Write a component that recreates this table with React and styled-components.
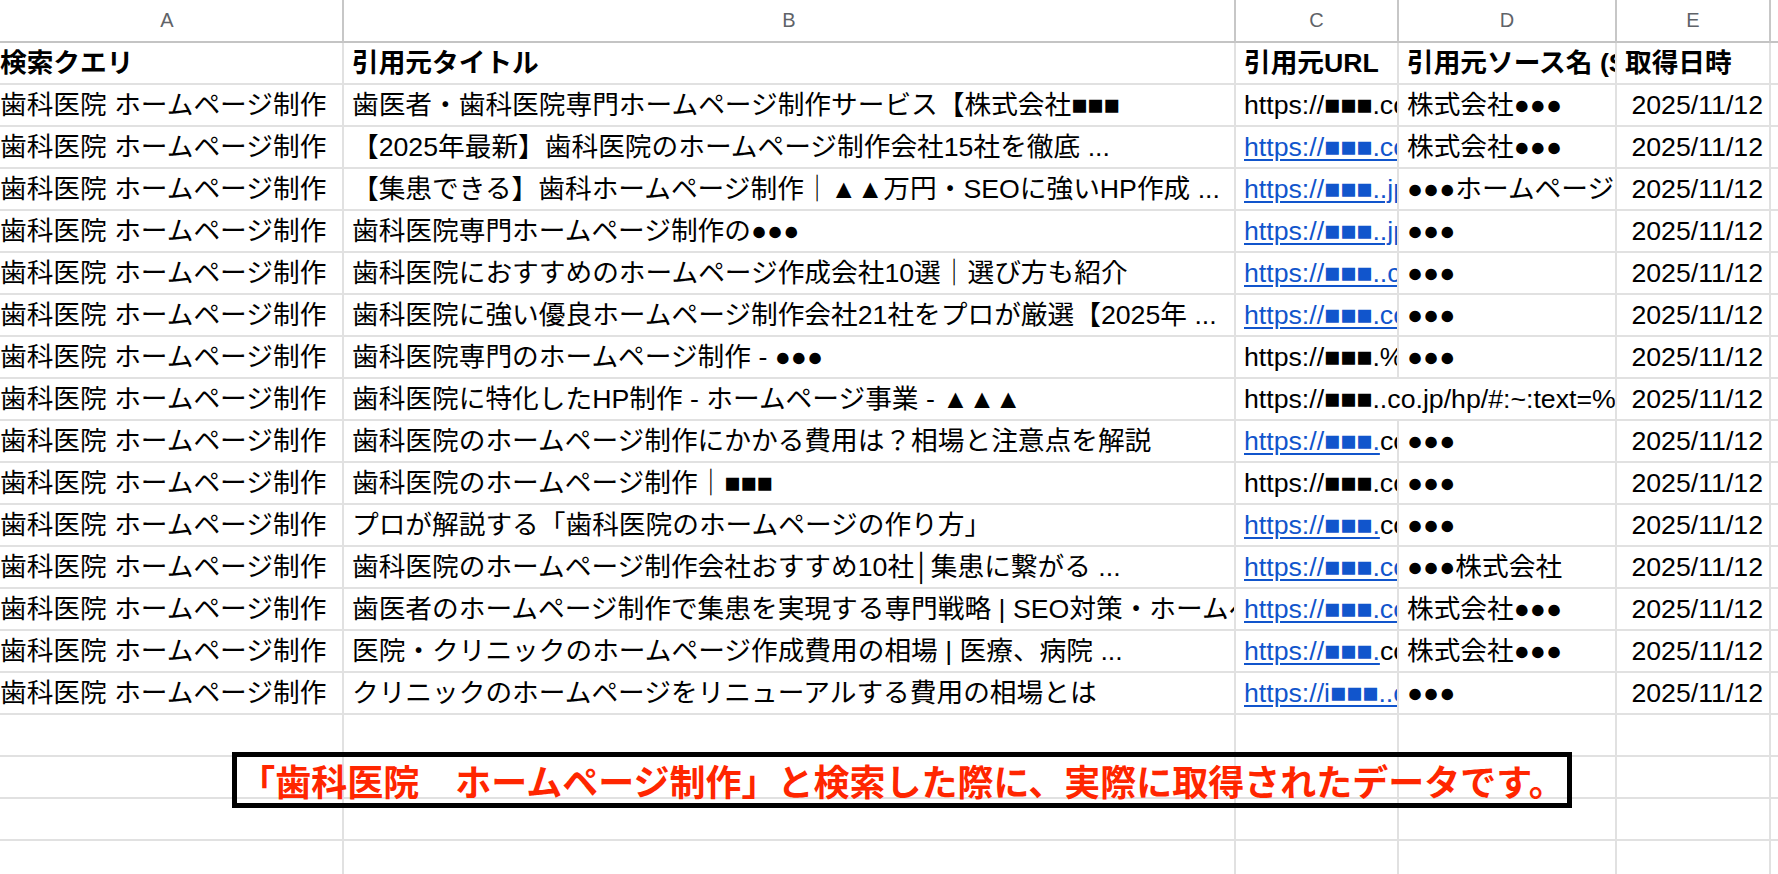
import React from 'react'
import styled, { createGlobalStyle } from 'styled-components'

const QUERY = '歯科医院 ホームページ制作'
const DATE = '2025/11/12'

const rows = [
    { title: '歯医者・歯科医院専門ホームページ制作サービス【株式会社■■■', plain: 'https://■■■.com/dental/', source: '株式会社●●●' },
    { title: '【2025年最新】歯科医院のホームページ制作会社15社を徹底 ...', link: 'https://■■■.com/column/', source: '株式会社●●●' },
    { title: '【集患できる】歯科ホームページ制作｜▲▲万円・SEOに強いHP作成 ...', link: 'https://■■■..jp/', source: '●●●ホームページ制作' },
    { title: '歯科医院専門ホームページ制作の●●●', link: 'https://■■■..jp/dental/', source: '●●●' },
    { title: '歯科医院におすすめのホームページ作成会社10選｜選び方も紹介', link: 'https://■■■..com/', source: '●●●' },
    { title: '歯科医院に強い優良ホームページ制作会社21社をプロが厳選【2025年 ...', link: 'https://■■■.com/media/', source: '●●●' },
    { title: '歯科医院専門のホームページ制作 - ●●●', plain: 'https://■■■.%E6%AD%AF', source: '●●●' },
    { title: '歯科医院に特化したHP制作 - ホームページ事業 - ▲▲▲', plain: 'https://■■■..co.jp/hp/#:~:text=%E6%AD%AF%E7%A7%91', source: null },
    { title: '歯科医院のホームページ制作にかかる費用は？相場と注意点を解説', link: 'https://■■■.', plain: 'com/', source: '●●●' },
    { title: '歯科医院のホームページ制作｜■■■', plain: 'https://■■■.com/', source: '●●●' },
    { title: 'プロが解説する「歯科医院のホームページの作り方」', link: 'https://■■■.', plain: 'com/', source: '●●●' },
    { title: '歯科医院のホームページ制作会社おすすめ10社│集患に繋がる ...', link: 'https://■■■.com/', source: '●●●株式会社' },
    { title: '歯医者のホームページ制作で集患を実現する専門戦略 | SEO対策・ホームページ制作', link: 'https://■■■.com/', source: '株式会社●●●' },
    { title: '医院・クリニックのホームページ作成費用の相場 | 医療、病院 ...', link: 'https://■■■.', plain: 'com/', source: '株式会社●●●' },
    { title: 'クリニックのホームページをリニューアルする費用の相場とは', link: 'https://i■■■..com/', source: '●●●' },
]

const letters = ['A', 'B', 'C', 'D', 'E', '']
const headings = ['検索クエリ', '引用元タイトル', '引用元URL', '引用元ソース名 (Source)', '取得日時', '']

export default function App() {
    return (
        <Page>
            <GlobalStyle />

            <Sheet>
                {letters.map((l, i) => (
                    <ColHead key={'col' + i}>{l}</ColHead>
                ))}

                {headings.map((h, i) => (
                    <Cell key={'head' + i} $bold>{h}</Cell>
                ))}

                {rows.map((r, i) => (
                    <React.Fragment key={i}>
                        <Cell>{QUERY}</Cell>
                        <Cell>{r.title}</Cell>
                        <Cell $span={r.source === null ? 2 : 1}>
                            <span>
                                {r.link && <Link>{r.link}</Link>}
                                {r.plain}
                            </span>
                        </Cell>
                        {r.source !== null && <Cell>{r.source}</Cell>}
                        <Cell $right>{DATE}</Cell>
                        <Cell />
                    </React.Fragment>
                ))}

                {[0, 1, 2, 3].map(i => (
                    <React.Fragment key={'empty' + i}>
                        {letters.map((_, j) => <Cell key={j} />)}
                    </React.Fragment>
                ))}
            </Sheet>

            <Note>「歯科医院　ホームページ制作」と検索した際に、実際に取得されたデータです。</Note>
        </Page>
    )
}

const GlobalStyle = createGlobalStyle`
    html, body {
        margin: 0;
        padding: 0;
        background: #ffffff;
        overflow: hidden;
    }

    body {
        font-family: "Liberation Sans", "Noto Sans CJK JP", sans-serif;
    }
`

const Page = styled.div`
    position: relative;
    width: 100vw;
    height: 100vh;
    overflow: hidden;
`

const Sheet = styled.div`
    display: grid;
    grid-template-columns: 352px 892px 163px 218px 154px 1fr;
    grid-template-rows: 43px;
    grid-auto-rows: 42px;
    margin-left: -8px;
    width: calc(100vw + 8px);
`

const ColHead = styled.div`
    box-sizing: border-box;
    display: flex;
    align-items: center;
    justify-content: center;
    border-right: 2px solid #c7c7c7;
    border-bottom: 2px solid #c4c4c4;
    font-family: "Liberation Sans", sans-serif;
    font-size: 20px;
    color: #5f6368;
`

const Cell = styled.div`
    box-sizing: border-box;
    grid-column: span ${p => p.$span || 1};
    display: flex;
    align-items: flex-end;
    justify-content: ${p => (p.$right ? 'flex-end' : 'flex-start')};
    padding: 0 ${p => (p.$right ? '6px' : '8px')} 3px 8px;
    border-right: 2px solid #e1e1e1;
    border-bottom: 2px solid #e1e1e1;
    overflow: hidden;
    white-space: nowrap;
    font-size: 26.7px;
    line-height: 34px;
    font-weight: ${p => (p.$bold ? 700 : 400)};
    color: #000000;
`

const Link = styled.span`
    color: #1155cc;
    text-decoration: underline;
    text-decoration-thickness: 2px;
    text-underline-offset: 3px;
`

const Note = styled.div`
    position: absolute;
    left: 232px;
    top: 752px;
    width: 1340px;
    height: 56px;
    box-sizing: border-box;
    border: 5px solid #000000;
    display: flex;
    align-items: center;
    justify-content: center;
    white-space: nowrap;
    font-family: "Noto Sans CJK JP", sans-serif;
    font-size: 36px;
    font-weight: 700;
    line-height: 1;
    color: #ff2600;
`
